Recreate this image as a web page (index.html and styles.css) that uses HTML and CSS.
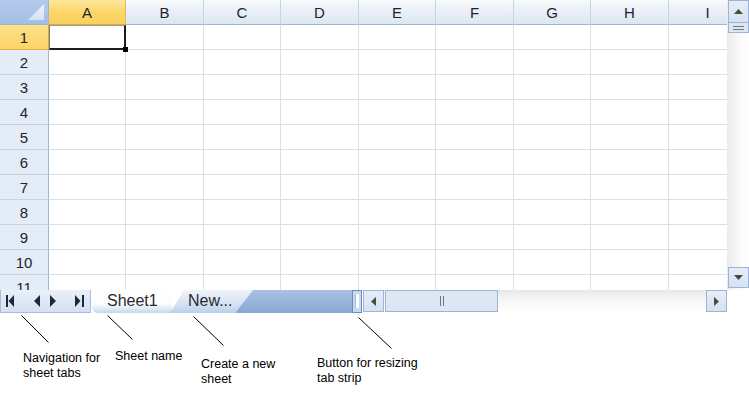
FILE: index.html
```html
<!DOCTYPE html>
<html lang="en">
<head>
  <meta charset="UTF-8">
  <title>Spreadsheet tabs</title>
  <link rel="stylesheet" href="styles.css">
</head>
<body>
  <div class="book">
    <div class="top">
      <div class="grid">
        <div class="corner"></div>
        <div class="ch on">A</div><div class="ch">B</div><div class="ch">C</div><div class="ch">D</div><div class="ch">E</div><div class="ch">F</div><div class="ch">G</div><div class="ch">H</div><div class="ch">I</div>

        <div class="rh on">1</div><div class="c sel"></div><div class="c"></div><div class="c"></div><div class="c"></div><div class="c"></div><div class="c"></div><div class="c"></div><div class="c"></div><div class="c"></div>
        <div class="rh">2</div><div class="c"></div><div class="c"></div><div class="c"></div><div class="c"></div><div class="c"></div><div class="c"></div><div class="c"></div><div class="c"></div><div class="c"></div>
        <div class="rh">3</div><div class="c"></div><div class="c"></div><div class="c"></div><div class="c"></div><div class="c"></div><div class="c"></div><div class="c"></div><div class="c"></div><div class="c"></div>
        <div class="rh">4</div><div class="c"></div><div class="c"></div><div class="c"></div><div class="c"></div><div class="c"></div><div class="c"></div><div class="c"></div><div class="c"></div><div class="c"></div>
        <div class="rh">5</div><div class="c"></div><div class="c"></div><div class="c"></div><div class="c"></div><div class="c"></div><div class="c"></div><div class="c"></div><div class="c"></div><div class="c"></div>
        <div class="rh">6</div><div class="c"></div><div class="c"></div><div class="c"></div><div class="c"></div><div class="c"></div><div class="c"></div><div class="c"></div><div class="c"></div><div class="c"></div>
        <div class="rh">7</div><div class="c"></div><div class="c"></div><div class="c"></div><div class="c"></div><div class="c"></div><div class="c"></div><div class="c"></div><div class="c"></div><div class="c"></div>
        <div class="rh">8</div><div class="c"></div><div class="c"></div><div class="c"></div><div class="c"></div><div class="c"></div><div class="c"></div><div class="c"></div><div class="c"></div><div class="c"></div>
        <div class="rh">9</div><div class="c"></div><div class="c"></div><div class="c"></div><div class="c"></div><div class="c"></div><div class="c"></div><div class="c"></div><div class="c"></div><div class="c"></div>
        <div class="rh">10</div><div class="c"></div><div class="c"></div><div class="c"></div><div class="c"></div><div class="c"></div><div class="c"></div><div class="c"></div><div class="c"></div><div class="c"></div>
        <div class="rh">11</div><div class="c"></div><div class="c"></div><div class="c"></div><div class="c"></div><div class="c"></div><div class="c"></div><div class="c"></div><div class="c"></div><div class="c"></div>
      </div>

      <!-- vertical scrollbar -->
      <div class="vscroll">
        <div class="sbtn vbtn">
          <svg width="9" height="5" viewBox="0 0 9 5"><path d="M0 5 L4.5 0 L9 5 Z" fill="#4b4b3c"/></svg>
        </div>
        <div class="vthumb"><span></span><span></span></div>
        <div class="vtrack"></div>
        <div class="sbtn vbtn">
          <svg width="9" height="5" viewBox="0 0 9 5"><path d="M0 0 L4.5 5 L9 0 Z" fill="#4b4b3c"/></svg>
        </div>
      </div>
    </div>

    <div class="tabbar">
      <div class="nav">
        <svg width="9" height="12" viewBox="0 0 9 12"><rect x="0" y="0" width="2" height="12" fill="#1e2838"/><path d="M8 0 L2.5 6 L8 12 Z" fill="#1e2838"/></svg>
        <svg width="6" height="12" viewBox="0 0 6 12"><path d="M6 0 L0 6 L6 12 Z" fill="#1e2838"/></svg>
        <svg width="6" height="12" viewBox="0 0 6 12"><path d="M0 0 L6 6 L0 12 Z" fill="#1e2838"/></svg>
        <svg width="9" height="12" viewBox="0 0 9 12"><path d="M0 0 L5.5 6 L0 12 Z" fill="#1e2838"/><rect x="7" y="0" width="2" height="12" fill="#1e2838"/></svg>
      </div>
      <div class="tab tab-active">Sheet1</div>
      <div class="tab tab-new">New...</div>
      <div class="tab-fill"></div>
      <div class="splitter"><span></span></div>

      <!-- horizontal scrollbar -->
      <div class="hscroll">
        <div class="sbtn hbtn">
          <svg width="5" height="9" viewBox="0 0 5 9"><path d="M5 0 L0 4.5 L5 9 Z" fill="#4b4b3c"/></svg>
        </div>
        <div class="hthumb"><span></span><span></span></div>
        <div class="htrack"></div>
        <div class="sbtn hbtn">
          <svg width="5" height="9" viewBox="0 0 5 9"><path d="M0 0 L5 4.5 L0 9 Z" fill="#4b4b3c"/></svg>
        </div>
      </div>
    </div>

    <!-- callouts -->
    <div class="notes">
      <svg class="leaders" width="749" height="80" viewBox="0 0 749 80">
        <line x1="21.5" y1="2.5" x2="48.5" y2="29.5"/>
        <line x1="107.5" y1="2.5" x2="132.5" y2="26.5"/>
        <line x1="193.5" y1="3.5" x2="223.5" y2="32.5"/>
        <line x1="358.5" y1="4.5" x2="391.5" y2="35.5"/>
      </svg>
      <div class="note note-nav">Navigation for<br>sheet tabs</div>
      <div class="note note-name">Sheet name</div>
      <div class="note note-new">Create a new<br>sheet</div>
      <div class="note note-split">Button for resizing<br>tab strip</div>
    </div>
  </div>
</body>
</html>
```

FILE: styles.css
```css
/* Page */
body {
  margin: 0;
  background: #fff;
  font-family: "Liberation Sans", Arial, sans-serif;
}

.book {
  width: 749px;
  height: 393px;
  overflow: hidden;
}

.top {
  display: flex;
  height: 290px;
}

/* Cell grid */
.grid {
  display: grid;
  grid-template-columns: 49px 77px 78px 77px 78px 77px 78px 77px 78px 78px;
  grid-auto-rows: 25px;
  width: 727px;
  height: 290px;
  overflow: hidden;
  font-size: 15px;
  color: #1f242c;
}

.grid > div {
  box-sizing: border-box;
}

.corner {
  position: relative;
  background: linear-gradient(#b4cbeb, #a3bfe6);
  border-right: 1px solid #9eb6ce;
  border-bottom: 1px solid #9eb6ce;
}

.corner::after {
  content: "";
  position: absolute;
  right: 4px;
  bottom: 4px;
  width: 16px;
  height: 16px;
  background: linear-gradient(#eef3fa, #d6e2f2);
  clip-path: polygon(100% 0, 100% 100%, 0 100%);
}

.ch {
  display: flex;
  align-items: center;
  justify-content: center;
  background: linear-gradient(#f8fafd, #e6edf6 60%, #dce5f1);
  border-right: 1px solid #c5d3e5;
  border-bottom: 1px solid #9eb6ce;
}

.ch.on {
  background: linear-gradient(#fde7a0, #fbd768 50%, #f9cf5c);
  border-right-color: #e5b856;
  border-bottom-color: #e0a93f;
}

.rh {
  display: flex;
  align-items: center;
  justify-content: center;
  background: #e4ecf7;
  border-right: 1px solid #9eb6ce;
  border-bottom: 1px solid #c5d3e5;
}

.rh.on {
  background: linear-gradient(#fde08a, #fbd565);
  border-bottom-color: #e0b24f;
  border-right-color: #e0a93f;
}

.c {
  border-right: 1px solid #d8dfea;
  border-bottom: 1px solid #d8dfea;
}

/* Active cell */
.sel {
  position: relative;
  z-index: 2;
}

.sel::after {
  content: "";
  position: absolute;
  left: 0;
  top: 0;
  right: -1px;
  bottom: -1px;
  border: 2px solid #1d1d1d;
  border-left: 1px solid #777;
  border-top: 1px solid #999;
}

.sel::before {
  content: "";
  position: absolute;
  right: -3px;
  bottom: -3px;
  width: 5px;
  height: 5px;
  background: #000;
  z-index: 1;
}

/* Scrollbars */
.sbtn {
  box-sizing: border-box;
  display: flex;
  align-items: center;
  justify-content: center;
  background: linear-gradient(#e5edf8, #d6e2f2);
  border: 1px solid #9db4d6;
}

.vscroll {
  display: flex;
  flex-direction: column;
  width: 22px;
  height: 290px;
  background: linear-gradient(90deg, #ebebeb, #fafafa 60%, #fff);
}

.vbtn {
  width: 21px;
  height: 23px;
  margin-left: 1px;
}

.vbtn:last-child {
  height: 21px;
  margin-bottom: 2px;
}

.vthumb {
  box-sizing: border-box;
  display: flex;
  flex-direction: column;
  align-items: center;
  justify-content: center;
  gap: 2px;
  width: 21px;
  height: 10px;
  margin-left: 1px;
  background: #dce6f4;
  border: 1px solid #9db4d6;
  border-top: none;
}

.vthumb span {
  width: 11px;
  height: 1px;
  background: #6e7a68;
}

.vtrack {
  flex: 1;
}

/* Tab strip */
.tabbar {
  display: flex;
  width: 727px;
  height: 23px;
}

.nav {
  box-sizing: border-box;
  display: flex;
  align-items: center;
  justify-content: space-between;
  width: 91px;
  height: 23px;
  padding: 0 6px 0 5px;
  background: linear-gradient(#e9f0f9, #d3e0f2);
  border: 1px solid #a6bddd;
  border-top: none;
}

.nav svg:nth-child(2) {
  margin-left: 10px;
}

.nav svg:nth-child(3) {
  margin-right: 10px;
}

.tab {
  box-sizing: border-box;
  height: 23px;
  padding-top: 2px;
  font-size: 16px;
  line-height: 18px;
  color: #2a2a2a;
}

.tab-active {
  width: 80px;
  margin-left: 1px;
  padding-left: 15px;
  background: linear-gradient(#fff, #fbfcfe 60%, #dbe6f5 85%, #c4d5ee);
  border-radius: 0 0 0 6px;
}

.tab-new {
  width: 83px;
  margin-left: -2px;
  padding-left: 18px;
  background: linear-gradient(#eef3fb, #d5e2f3 60%, #bcd0ec);
  clip-path: polygon(14px 0, 100% 0, calc(100% - 18px) 100%, 0 100%);
}

.tab-fill {
  flex: 1;
  margin-left: -18px;
  background: linear-gradient(#a9c1e3, #95b1db 60%, #8aa7d4);
  clip-path: polygon(18px 0, 100% 0, 100% 100%, 0 100%);
}

.splitter {
  box-sizing: border-box;
  display: flex;
  justify-content: center;
  width: 10px;
  height: 23px;
  padding: 3px 0 4px;
  background: #c9d9ef;
  border: 1px solid #6f8dba;
}

.splitter span {
  width: 3px;
  background: #fff;
  border-left: 1px solid #a9bfdf;
}

.hscroll {
  display: flex;
  width: 364px;
  height: 23px;
  margin-left: 1px;
  background: linear-gradient(#e8e8e8, #f6f6f6 40%, #fff);
}

.hbtn {
  width: 21px;
  height: 22px;
}

.hthumb {
  box-sizing: border-box;
  display: flex;
  align-items: center;
  justify-content: center;
  gap: 2px;
  width: 113px;
  height: 22px;
  margin-left: 1px;
  background: #dce6f4;
  border: 1px solid #9db4d6;
}

.hthumb span {
  width: 1px;
  height: 10px;
  background: #6e7a68;
}

.htrack {
  flex: 1;
}

/* Callouts */
.notes {
  position: relative;
  height: 80px;
}

.leaders {
  position: absolute;
  left: 0;
  top: 0;
}

.leaders line {
  stroke: #000;
  stroke-width: 1;
}

.note {
  position: absolute;
  font-size: 12.5px;
  line-height: 15px;
  color: #000;
}

.note-nav {
  left: 23px;
  top: 38px;
}

.note-name {
  left: 115px;
  top: 36px;
}

.note-new {
  left: 201px;
  top: 44px;
}

.note-split {
  left: 317px;
  top: 43px;
}
```
